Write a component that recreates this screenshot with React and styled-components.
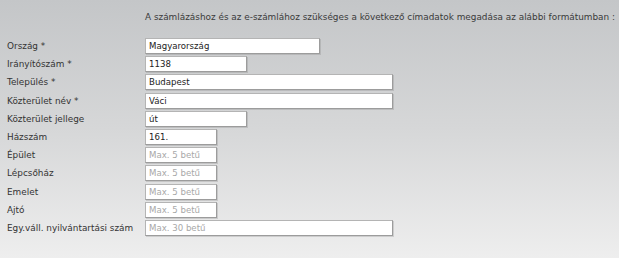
import React from "react";
import styled, { createGlobalStyle } from "styled-components";

const GlobalStyle = createGlobalStyle`
    html, body {
        margin: 0;
        padding: 0;
    }
    body {
        width: 619px;
        height: 258px;
        overflow: hidden;
        background: linear-gradient(to bottom, #c4c6c8 0%, #d6d7d8 50%, #eeeeee 100%);
        font-family: "DejaVu Sans", Verdana, sans-serif;
        color: #333;
    }
`;

const Page = styled.div`
    width: 619px;
    height: 258px;
    padding: 11px 0 0 0;
    box-sizing: border-box;
`;

const Intro = styled.div`
    padding-left: 145px;
    font-size: 8.9px;
    line-height: 12px;
    color: #3a3a3a;
    white-space: nowrap;
`;

const Form = styled.div`
    margin-top: 15px;
    display: flex;
    flex-direction: column;
    gap: 2.2px;
`;

const Row = styled.div`
    display: grid;
    grid-template-columns: 145px auto;
    align-items: center;
    height: 16px;
`;

const Label = styled.label`
    padding-left: 7px;
    font-size: 8.9px;
    color: #333;
    white-space: nowrap;
`;

const widths = { country: 175, short: 102, long: 248, tiny: 72 };

const Field = styled.input`
    width: ${(p) => widths[p.$size]}px;
    height: 16px;
    box-sizing: border-box;
    margin: 0;
    padding: 0 3px;
    border: 1px solid #b4b4b4;
    border-right-color: #9c9c9c;
    border-bottom-color: #9c9c9c;
    box-shadow: 1px 1px 0 rgba(120, 120, 120, 0.25);
    background: #fff;
    font-family: "DejaVu Sans", Verdana, sans-serif;
    font-size: 8.6px;
    color: #222;
    outline: none;
    &::placeholder {
        color: #a8a8a8;
    }
`;

const fields = [
    { label: "Ország *", size: "country", value: "Magyarország" },
    { label: "Irányítószám *", size: "short", value: "1138" },
    { label: "Település *", size: "long", value: "Budapest" },
    { label: "Közterület név *", size: "long", value: "Váci" },
    { label: "Közterület jellege", size: "short", value: "út" },
    { label: "Házszám", size: "tiny", value: "161." },
    { label: "Épület", size: "tiny", placeholder: "Max. 5 betű" },
    { label: "Lépcsőház", size: "tiny", placeholder: "Max. 5 betű" },
    { label: "Emelet", size: "tiny", placeholder: "Max. 5 betű" },
    { label: "Ajtó", size: "tiny", placeholder: "Max. 5 betű" },
    { label: "Egy.váll. nyilvántartási szám", size: "long", placeholder: "Max. 30 betű" },
];

const App = () => {
    return (
        <>
            <GlobalStyle />
            <Page>
                <Intro>
                    A számlázáshoz és az e-számlához szükséges a következő címadatok megadása az alábbi formátumban :
                </Intro>
                <Form>
                    {fields.map((f) => (
                        <Row key={f.label}>
                            <Label>{f.label}</Label>
                            <Field
                                $size={f.size}
                                defaultValue={f.value}
                                placeholder={f.placeholder}
                            />
                        </Row>
                    ))}
                </Form>
            </Page>
        </>
    );
};

export default App;
